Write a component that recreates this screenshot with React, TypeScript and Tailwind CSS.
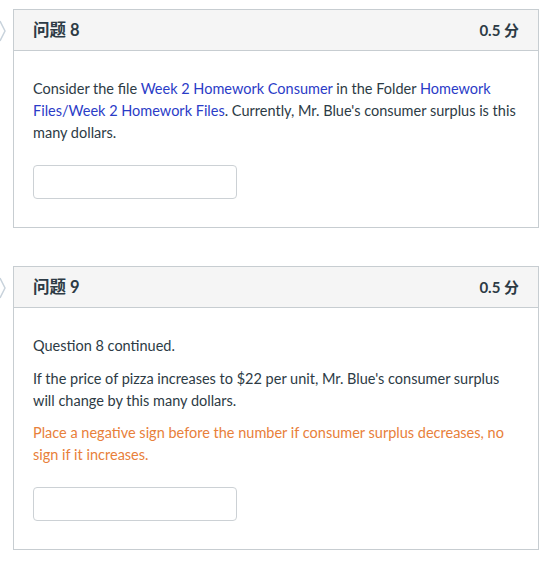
import React from "react";

const LINK = "text-[#2b3cc7]";

function Chevron() {
  return (
    <svg width="8" height="22" viewBox="0 0 8 22" className="absolute left-0 top-[11px]">
      <polyline points="0,1 5,11 0,21" fill="none" stroke="#c9d3dc" strokeWidth="1.5" />
    </svg>
  );
}

function QuestionCard({ num, children }: { num: number; children: React.ReactNode }) {
  return (
    <div className="relative pl-[13px] pr-[21px]">
      <Chevron />
      <div className="border border-[#c7cdd1] bg-white">
        <div className="h-[41px] bg-[#f5f5f5] border-b border-[#c7cdd1] px-[19px] flex items-center justify-between">
          <span className="text-[16.5px] font-bold text-[#2d3b45]">问题 {num}</span>
          <span className="text-[15px] font-bold text-[#2d3b45]">0.5 分</span>
        </div>
        <div className="px-[19px] pt-[27px] pb-[28px]">{children}</div>
      </div>
    </div>
  );
}

function Answer() {
  return <div className="w-[204px] h-[34px] border border-[#ccd1d5] rounded-[4px] bg-white" />;
}

export default function App() {
  return (
    <div
      className="w-[560px] h-[568px] bg-white pt-[9px] text-[#2d3b45] text-[14.5px] leading-[22px]"
      style={{ fontFamily: 'Lato, "Noto Sans CJK SC", sans-serif' }}
    >
      <QuestionCard num={8}>
        <p>
          Consider the file <span className={LINK}>Week 2 Homework Consumer</span> in the Folder{" "}
          <span className={LINK}>Homework Files/Week 2 Homework Files</span>. Currently, Mr. Blue's consumer surplus is this
          many dollars.
        </p>
        <div className="mt-[21px]">
          <Answer />
        </div>
      </QuestionCard>

      <div className="h-[38px]" />

      <QuestionCard num={9}>
        <p>Question 8 continued.</p>
        <p className="mt-[11px]">
          If the price of pizza increases to $22 per unit, Mr. Blue's consumer surplus will change by this many dollars.
        </p>
        <p className="mt-[10px] text-[#e8803a]">
          Place a negative sign before the number if consumer surplus decreases, no sign if it increases.
        </p>
        <div className="mt-[21px]">
          <Answer />
        </div>
      </QuestionCard>
    </div>
  );
}
